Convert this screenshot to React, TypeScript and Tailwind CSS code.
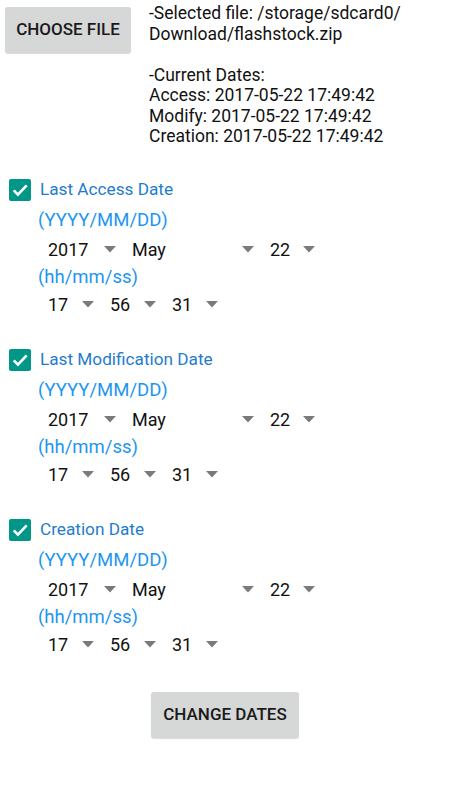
import React from "react";

const font = { fontFamily: "Roboto, 'Liberation Sans', sans-serif" };

function Arrow() {
  return (
    <svg width="12" height="7" viewBox="0 0 12 7" className="shrink-0">
      <polygon points="0,0 12,0 6,6.5" fill="#7a7a7a" />
    </svg>
  );
}

function Spinner({ value, width, ml = 0 }: { value: string; width: number; ml?: number }) {
  return (
    <div
      className="flex items-center justify-between pl-[10px] pr-[6px] h-full"
      style={{ width, marginLeft: ml }}
    >
      <span className="text-[18px] text-[#111]">{value}</span>
      <Arrow />
    </div>
  );
}

function Checkbox() {
  return (
    <div className="w-[22px] h-[22px] rounded-[2px] bg-[#009688] flex items-center justify-center">
      <svg width="20" height="20" viewBox="0 0 24 24">
        <path d="M4.5 12.5l5 5L20 6.5" fill="none" stroke="white" strokeWidth="3.2" />
      </svg>
    </div>
  );
}

function Section({ title }: { title: string }) {
  return (
    <div className="flex flex-col">
      <div className="h-[30px] flex items-center pl-[9px]">
        <Checkbox />
        <span className="ml-[9px] text-[17.2px] text-[#1f7ccd]">{title}</span>
      </div>
      <div className="h-[33px] flex items-center pl-[38px] text-[18.5px] text-[#1e96f0]">(YYYY/MM/DD)</div>
      <div className="h-[24px] flex items-center">
        <Spinner value="2017" width={84} ml={38} />
        <Spinner value="May" width={138} />
        <Spinner value="22" width={61} />
      </div>
      <div className="h-[32px] flex items-center pl-[38px] text-[18.5px] text-[#1e96f0]">(hh/mm/ss)</div>
      <div className="h-[22px] flex items-center">
        <Spinner value="17" width={62} ml={38} />
        <Spinner value="56" width={62} />
        <Spinner value="31" width={62} />
      </div>
    </div>
  );
}

export default function App() {
  return (
    <div className="w-[450px] h-[800px] bg-white overflow-hidden" style={font}>
      <div className="flex">
        <div className="pl-[5px] pt-[7px]">
          <div className="w-[126px] h-[46px] rounded-[3px] bg-[#d6d7d7] shadow-[0_1px_1px_rgba(0,0,0,0.15)] flex items-center justify-center text-[17px] font-medium text-[#1a1a1a]">
            CHOOSE FILE
          </div>
        </div>
        <div className="ml-[18px] pt-[3px] text-[17.5px] leading-[20.5px] text-[#111]">
          <div>-Selected file: /storage/sdcard0/</div>
          <div>Download/flashstock.zip</div>
          <div>&nbsp;</div>
          <div>-Current Dates:</div>
          <div>Access: 2017-05-22 17:49:42</div>
          <div>Modify: 2017-05-22 17:49:42</div>
          <div>Creation: 2017-05-22 17:49:42</div>
        </div>
      </div>
      <div className="mt-[28px] flex flex-col gap-[29px]">
        <Section title="Last Access Date" />
        <Section title="Last Modification Date" />
        <Section title="Creation Date" />
      </div>
      <div className="flex justify-center mt-[36px]">
        <div className="w-[148px] h-[46px] rounded-[3px] bg-[#d6d7d7] shadow-[0_1px_1px_rgba(0,0,0,0.15)] flex items-center justify-center text-[17px] font-medium text-[#1a1a1a]">
          CHANGE DATES
        </div>
      </div>
    </div>
  );
}
